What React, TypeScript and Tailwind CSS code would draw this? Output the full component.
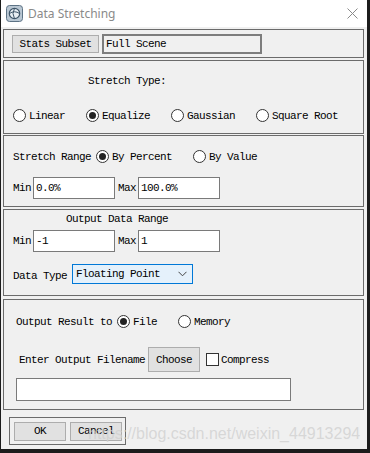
import type { ReactNode } from 'react';

const MONO = "font-['Liberation_Mono','DejaVu_Sans_Mono',monospace] text-[11px] tracking-[-0.6px] text-black";

function Radio({ checked, label, className = '' }: { checked?: boolean; label: string; className?: string }) {
  return (
    <div className={`flex items-center ${className}`}>
      <span className="flex h-[13px] w-[13px] shrink-0 items-center justify-center rounded-full border border-[#333] bg-white">
        {checked && <span className="h-[7px] w-[7px] rounded-full bg-[#222]" />}
      </span>
      <span className="ml-[3px] leading-[12px]">{label}</span>
    </div>
  );
}

function Field({ value = '', w }: { value?: string; w: string }) {
  return (
    <div className={`flex h-[22px] items-center border border-[#7a7a7a] bg-white pl-[2px] ${w}`}>
      <span className="leading-[12px]">{value}</span>
    </div>
  );
}

function Panel({ className = '', children }: { className?: string; children: ReactNode }) {
  return <div className={`w-[361px] border border-[#6b6b6b] ${className}`}>{children}</div>;
}

function Btn({ label, className = '' }: { label: string; className?: string }) {
  return (
    <div className={`flex items-center justify-center border border-[#adadad] bg-[#e1e1e1] ${className}`}>
      <span className="leading-[12px]">{label}</span>
    </div>
  );
}

export default function App() {
  return (
    <div className="relative h-[453px] w-[370px] overflow-hidden bg-[#1c1c1c]">
      <div className="ml-px flex h-[449px] w-[366px] flex-col bg-[#f0f0f0]">
        {/* title bar */}
        <div className="flex h-[27px] shrink-0 items-center bg-white">
          <svg className="ml-[5px]" width="17" height="17" viewBox="0 0 17 17">
            <rect x="0.5" y="0.5" width="16" height="16" rx="3" fill="#b9c7d3" stroke="#5d7385" />
            <circle cx="8.5" cy="8.5" r="5.2" fill="#e8eef3" stroke="#3e5568" strokeWidth="1.2" />
            <path d="M3.5 8.5 Q8.5 5 13.5 8.5 M8.5 3.3 Q5.5 8.5 8.5 13.7" fill="none" stroke="#3e5568" strokeWidth="1" />
          </svg>
          <span className="ml-[5px] font-['Noto_Sans','Liberation_Sans',sans-serif] text-[12px] text-[#8a8a8a]">Data Stretching</span>
          <svg className="ml-auto mr-[9px]" width="11" height="11" viewBox="0 0 11 11">
            <path d="M0.5 0.5 L10.5 10.5 M10.5 0.5 L0.5 10.5" stroke="#8a8a8a" strokeWidth="1" />
          </svg>
        </div>

        <div className={`flex flex-col pl-[2px] ${MONO}`}>
          {/* stats subset */}
          <Panel className="mt-[2px] flex h-[29px] items-center pl-[8px]">
            <Btn label="Stats Subset" className="h-[18px] w-[87px]" />
            <div className="ml-[3px] flex h-[20px] w-[160px] items-center border-2 border-[#7d7d7d] bg-[#f0f0f0] pl-[2px]">
              <span className="leading-[12px]">Full Scene</span>
            </div>
          </Panel>

          {/* stretch type */}
          <Panel className="mt-[2px] h-[74px] pl-[9px] pt-[14px]">
            <div className="ml-[75px] leading-[12px]">Stretch Type:</div>
            <div className="mt-[22px] flex">
              <Radio label="Linear" className="w-[73px]" />
              <Radio checked label="Equalize" className="w-[85px]" />
              <Radio label="Gaussian" className="w-[85px]" />
              <Radio label="Square Root" />
            </div>
          </Panel>

          {/* stretch range */}
          <Panel className="mt-px h-[72px] pl-[9px] pt-[14px]">
            <div className="flex items-center">
              <span className="w-[83px] leading-[12px]">Stretch Range</span>
              <Radio checked label="By Percent" className="w-[97px]" />
              <Radio label="By Value" />
            </div>
            <div className="mt-[14px] flex items-center">
              <span className="w-[20px]">Min</span>
              <Field value="0.0%" w="w-[82px]" />
              <span className="ml-[3px] w-[20px]">Max</span>
              <Field value="100.0%" w="w-[82px]" />
            </div>
          </Panel>

          {/* output data range */}
          <Panel className="mt-[2px] h-[87px] pl-[9px] pt-[3px]">
            <div className="ml-[53px] leading-[12px]">Output Data Range</div>
            <div className="mt-[5px] flex items-center">
              <span className="w-[20px]">Min</span>
              <Field value="-1" w="w-[82px]" />
              <span className="ml-[3px] w-[20px]">Max</span>
              <Field value="1" w="w-[82px]" />
            </div>
            <div className="mt-[12px] flex items-center">
              <span className="mt-[3px] w-[59px] leading-[12px]">Data Type</span>
              <div className="flex h-[20px] w-[121px] items-center border border-[#0078d7] bg-[#e5f1fb] pl-[3px] pr-[5px]">
                <span className="leading-[12px]">Floating Point</span>
                <svg className="ml-auto" width="9" height="6" viewBox="0 0 9 6">
                  <path d="M0.5 0.8 L4.5 4.8 L8.5 0.8" fill="none" stroke="#444" strokeWidth="1" />
                </svg>
              </div>
            </div>
          </Panel>

          {/* output */}
          <Panel className="mt-[3px] h-[111px] pl-[12px] pt-[15px]">
            <div className="flex items-center">
              <span className="w-[101px] leading-[12px]">Output Result to</span>
              <Radio checked label="File" className="w-[61px]" />
              <Radio label="Memory" />
            </div>
            <div className="mt-[19px] flex items-center pl-[3px]">
              <span className="w-[129px] leading-[12px]">Enter Output Filename</span>
              <Btn label="Choose" className="h-[25px] w-[52px]" />
              <span className="ml-[6px] h-[13px] w-[13px] border border-[#333] bg-white" />
              <span className="ml-[2px] leading-[12px]">Compress</span>
            </div>
            <div className="mt-[6px] h-[23px] w-[275px] border border-[#7a7a7a] bg-white" />
          </Panel>

          {/* ok / cancel */}
          <div className="ml-[6px] mt-[7px] flex h-[28px] w-[117px] items-center gap-[4px] border border-[#6b6b6b] pl-[4px]">
            <Btn label="OK" className="h-[19px] w-[52px]" />
            <Btn label="Cancel" className="h-[19px] w-[52px]" />
          </div>
        </div>
      </div>

      <div className="pointer-events-none absolute left-[88px] top-[424px] font-['Liberation_Sans',Arial,sans-serif] text-[16px] leading-[20px] text-[#d0d0d0]/80">
        https://blog.csdn.net/weixin_44913294
      </div>
    </div>
  );
}
